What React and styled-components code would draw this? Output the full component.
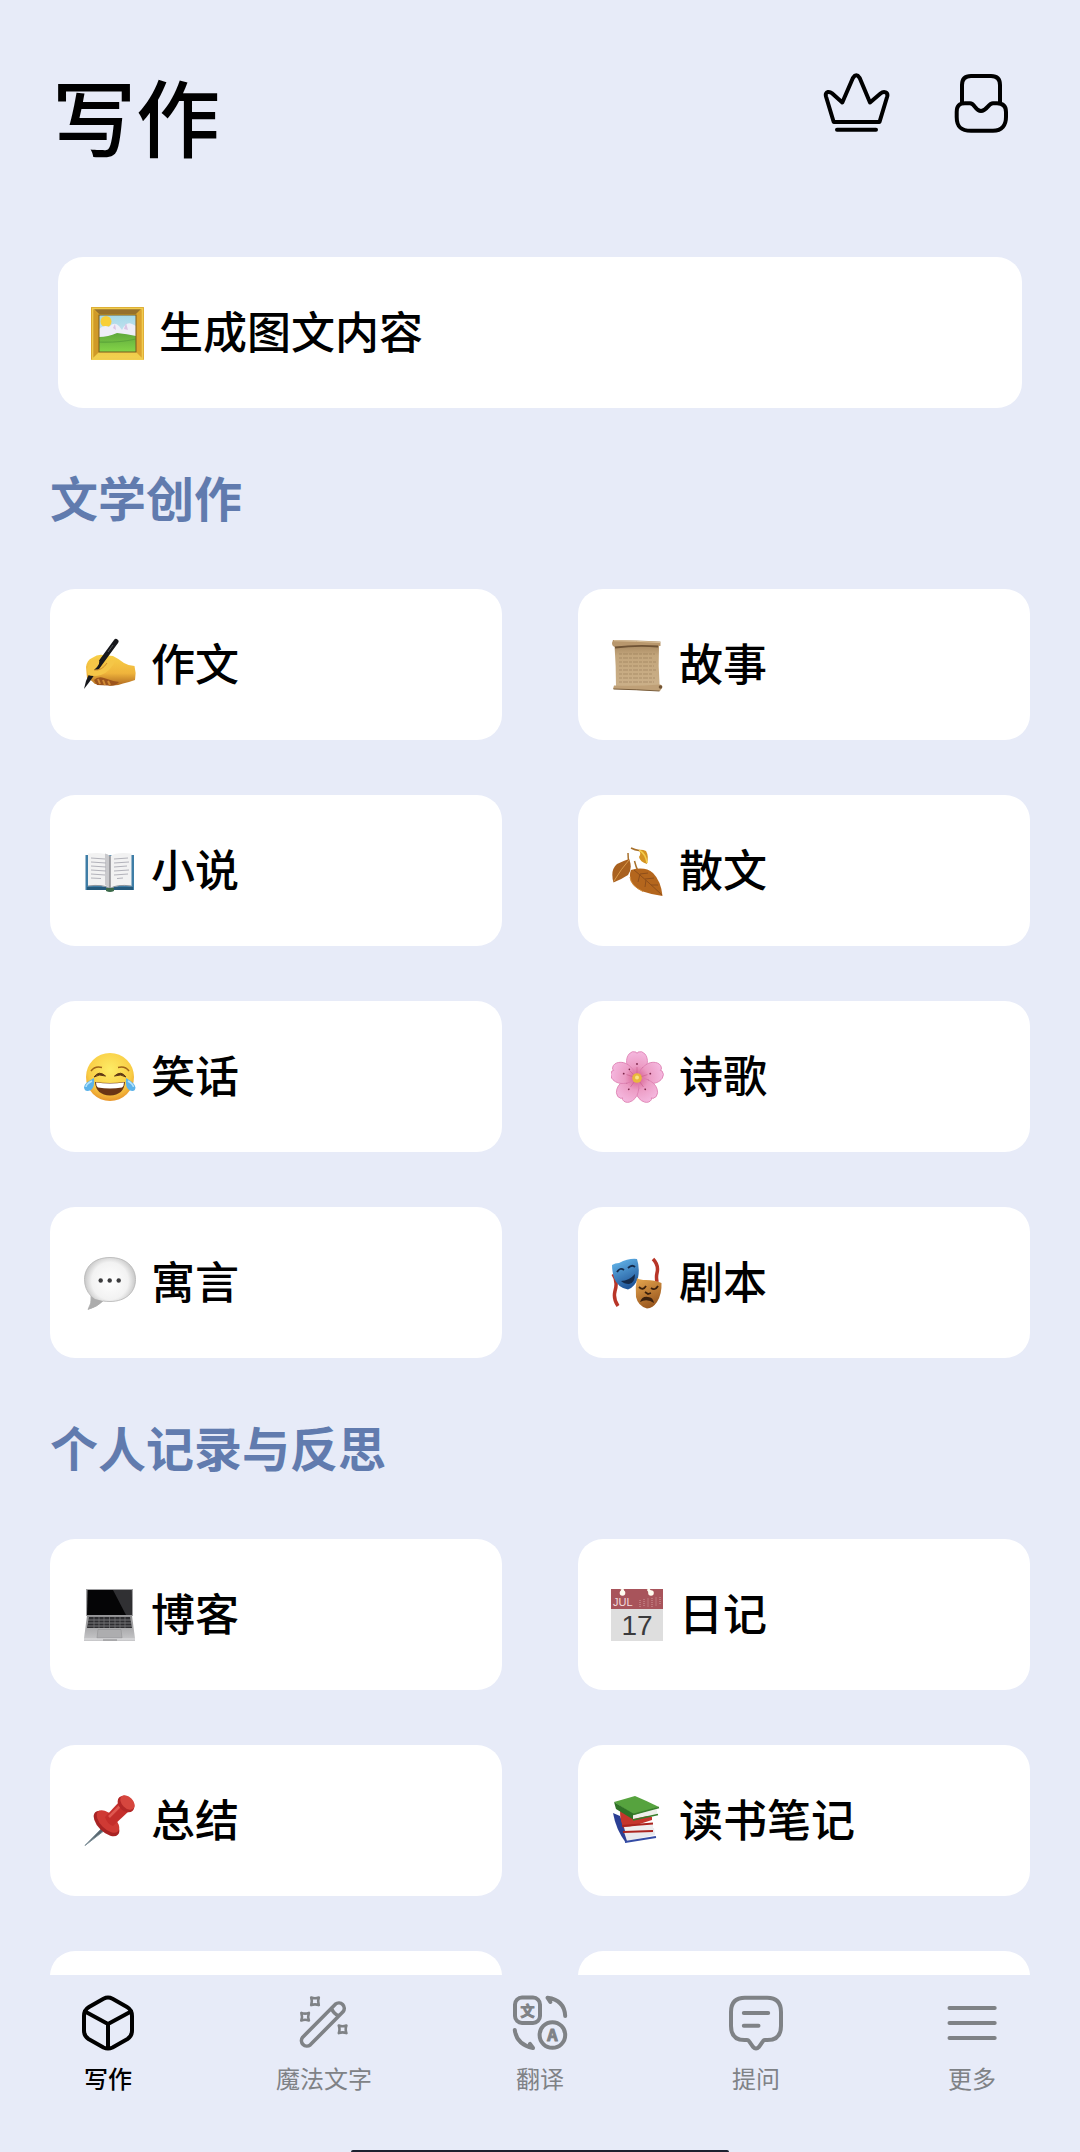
import React, { useState } from 'react';
import styled, { createGlobalStyle } from 'styled-components';

const GlobalStyle = createGlobalStyle`
  * {
    box-sizing: border-box;
  }
  body {
    margin: 0;
    background-color: #e7ebf8;
    font-family: 'Noto Sans CJK SC', sans-serif;
  }
`;

// Full-height column: scrolling content on top, tab bar at the bottom
const Screen = styled.div`
  display: flex;
  flex-direction: column;
  height: 100vh;
  color: #000000;
`;

const Content = styled.main`
  flex: 1;
  min-height: 0;
  overflow-y: auto;
  scrollbar-width: none;
  padding: 71px 50px 0;
`;

const Header = styled.header`
  display: flex;
  justify-content: space-between;
  align-items: flex-start;
  padding: 0 20px 0 2px;
  margin-bottom: 98px;
`;

const Title = styled.h1`
  margin: 0;
  font-size: 84px;
  line-height: 88px;
  font-weight: 500;
`;

const HeaderActions = styled.div`
  display: flex;
  gap: 62px;
`;

const IconButton = styled.button`
  display: flex;
  padding: 0;
  border: none;
  background: none;
  color: inherit;
  cursor: pointer;
`;

const Featured = styled.div`
  display: grid;
  padding: 0 8px;
`;

const SectionTitle = styled.h2`
  margin: 0;
  padding: 56px 0 61px;
  font-size: 48px;
  line-height: 64px;
  font-weight: 700;
  color: #617bae;
`;

const CardGrid = styled.div`
  display: grid;
  grid-template-columns: 1fr 1fr;
  gap: 55px 76px;
`;

const CardButton = styled.button`
  display: flex;
  align-items: center;
  gap: 14px;
  height: 151px;
  padding: 0 33px;
  border: none;
  border-radius: 25px;
  background-color: #ffffff;
  color: inherit;
  font-family: inherit;
  font-size: 44px;
  line-height: 64px;
  font-weight: 500;
  text-align: left;
  cursor: pointer;
`;

const CardLabel = styled.span`
  padding-bottom: 5px;
`;

const TabBar = styled.nav`
  display: flex;
  flex-direction: column;
  justify-content: space-between;
  align-items: center;
  height: 177px;
  padding-top: 20px;
`;

const TabList = styled.div`
  display: grid;
  grid-template-columns: repeat(5, 1fr);
  width: 100%;
`;

const TabLink = styled.a`
  display: flex;
  flex-direction: column;
  align-items: center;
  gap: 11px;
  color: ${({ $active }) => ($active ? '#000000' : '#7f8286')};
  font-size: 24px;
  line-height: 32px;
  font-weight: ${({ $active }) => ($active ? 500 : 400)};
  text-decoration: none;
`;

const HomeIndicator = styled.div`
  width: 35%;
  height: 2px;
  border-radius: 2px 2px 0 0;
  background-color: #1b2130;
`;

const LineSvg = styled.svg`
  display: block;
  fill: none;
  stroke: currentColor;
  stroke-width: 4;
  stroke-linecap: round;
  stroke-linejoin: round;
`;

const EmojiSvg = styled.svg`
  display: block;
  flex: none;
  width: 54px;
  height: 54px;
`;

const Emoji = ({ children }) => (
  <EmojiSvg viewBox="0 0 54 54" aria-hidden="true">
    {children}
  </EmojiSvg>
);

/* ---------- line icons ---------- */

const CrownIcon = () => (
  <LineSvg width="68" height="64" viewBox="0 0 68 64">
    <path d="M11.7 51L4 25.5Q3 21.8 6 21Q8 20.6 10 22.3L20.3 31.5L31 6.8Q34.3 1.8 37.6 6.8L48 31.5L58.5 22.5Q61 20.5 63.5 21.3Q66 22.5 65.2 25.5L57.5 51Z" />
    <path d="M15 58.7H54" />
  </LineSvg>
);

const InboxIcon = () => (
  <LineSvg width="58" height="64" viewBox="0 0 58 64">
    <path d="M10 32V14Q10 5 19 5H39Q48 5 48 14V32" />
    <path d="M18 32.3C23 32.3 23 40 29 40C35 40 36 32.3 41 32.3H45C51 32.3 54 35 54 41V46C54 54 50 59.7 41 59.7H19C9 59.7 4.7 56 4.7 46V41C4.7 35 7 32.3 13 32.3Z" />
  </LineSvg>
);

const CubeIcon = () => (
  <LineSvg width="56" height="56" viewBox="0 0 56 56">
    <path d="M23.5 3.7Q28 1.4 32.5 3.7L47 12Q52 15 52 21V35.5Q52 41 47.5 44L32.5 52.5Q28 54.7 23.5 52.5L8.5 44Q4 41 4 35.5V21Q4 15 9 12Z" />
    <path d="M5 16.5L28 29L51 16.5M28 29V53" />
  </LineSvg>
);

const WandIcon = () => (
  <LineSvg width="56" height="56" viewBox="0 0 56 56">
    <path d="M39.4 9.2L6.7 42.2A5.4 5.4 0 0 0 14.3 49.8L47 16.8A5.4 5.4 0 0 0 39.4 9.2ZM35.5 13.3Q37.5 18.5 42.8 21" strokeWidth="3.6" />
    <g strokeWidth="2.6">
      <path d="M15.2 2.5Q19 4 22.8 2.5Q21.4 6.3 22.8 10.1Q19 8.6 15.2 10.1Q16.6 6.3 15.2 2.5Z" />
      <path d="M5.3 17.9Q9.1 19.4 12.9 17.9Q11.5 21.7 12.9 25.5Q9.1 24 5.3 25.5Q6.7 21.7 5.3 17.9Z" />
      <path d="M42.8 30.5Q46.6 32 50.4 30.5Q49 34.3 50.4 38.1Q46.6 36.6 42.8 38.1Q44.2 34.3 42.8 30.5Z" />
    </g>
  </LineSvg>
);

const GlyphText = styled.text`
  fill: currentColor;
  stroke: currentColor;
  stroke-width: 1;
  font-size: ${({ $size }) => $size}px;
  font-weight: 700;
  text-anchor: middle;
`;

const TranslateIcon = () => (
  <LineSvg width="56" height="56" viewBox="0 0 56 56">
    <rect x="3" y="2.5" width="25" height="25.5" rx="7" />
    <GlyphText $size={14} x="15.5" y="20.5">文</GlyphText>
    <circle cx="40.4" cy="40" r="12.8" />
    <GlyphText $size={16} x="40.4" y="45.5">A</GlyphText>
    <path d="M2.8 35Q4.5 49.5 21 53L18 48.8M53.2 21Q52.5 5 35.5 2.7L38.3 7" />
  </LineSvg>
);

const ChatIcon = () => (
  <LineSvg width="56" height="56" viewBox="0 0 56 56">
    <path d="M17 2.7H39Q53 2.7 53 17V31Q53 45 39.5 45H37Q35.8 45 35 46.2L31 51.8Q28 55 25 51.8L21 46.2Q20.2 45 19 45H16.5Q3 45 3 31V17Q3 2.7 17 2.7Z" />
    <path d="M15.8 18H40.2M15.8 30.7H30.5" />
  </LineSvg>
);

const MenuIcon = () => (
  <LineSvg width="56" height="56" viewBox="0 0 56 56">
    <path d="M5.5 13H50.7M5.5 28H50.7M5.5 43H50.7" />
  </LineSvg>
);

/* ---------- colour pictures on the cards ---------- */

const Picture = () => (
  <Emoji>
    <defs>
      <linearGradient id="frame" x1="0" y1="0" x2="0" y2="1">
        <stop offset="0" stopColor="#d8a72c" />
        <stop offset="1" stopColor="#f3d250" />
      </linearGradient>
      <linearGradient id="sky" x1="0" y1="0" x2="0" y2="1">
        <stop offset="0" stopColor="#a4d8e8" />
        <stop offset="1" stopColor="#e6eef6" />
      </linearGradient>
      <linearGradient id="grass" x1="0" y1="0" x2="0" y2="1">
        <stop offset="0" stopColor="#5fa83c" />
        <stop offset="1" stopColor="#84d548" />
      </linearGradient>
    </defs>
    <rect y="1" width="53" height="53" rx="1" fill="url(#frame)" />
    <path d="M0 1L8 9V46L0 54Z" fill="#d09a28" />
    <path d="M53 1L45 9V46L53 54Z" fill="#dba32e" />
    <path d="M3 3H50L45 8H8Z" fill="#96702c" />
    <path d="M1.5 2.5V52.5H51.5V2.5Z" fill="none" stroke="#f0cc50" strokeWidth="1.6" />
    <rect x="8" y="9" width="37" height="37" fill="url(#sky)" />
    <circle cx="15" cy="15.5" r="5.5" fill="#f8cf38" />
    <path d="M8 23Q13 18 18 21Q23 15 28 20L31 24Q35 15 41 18L45 20V31H8Z" fill="#eeeef8" />
    <path d="M22 22L24 18L25 24ZM33 23L35 17L37 24Z" fill="#d9c5e4" />
    <path d="M8 31Q17 31 26 27Q36 28 45 30V46H8Z" fill="url(#grass)" />
    <path d="M8 36Q25 37 45 33" fill="none" stroke="#5ca53a" strokeWidth="1.2" />
    <rect x="8" y="9" width="37" height="37" fill="none" stroke="#7b5a1e" />
  </Emoji>
);

const WritingHand = () => (
  <Emoji>
    <defs>
      <linearGradient id="skin" x1="0" y1="0" x2="0" y2="1">
        <stop offset="0" stopColor="#f8d048" />
        <stop offset="0.6" stopColor="#efb43c" />
        <stop offset="1" stopColor="#b06a20" />
      </linearGradient>
    </defs>
    <path d="M3 29Q4 22 9 20Q15 16 20 17L30 18Q36 21 41 25Q46 28 51.5 28Q53.5 35 52 42Q46 44 40 45.5Q33 48.5 25 47L12 46Q8 42 4 40Z" fill="url(#skin)" />
    <path d="M11 42Q15 38 21 40Q29 43 36 44Q31 49 25 47.5L14 47Z" fill="#9c541c" />
    <path d="M15 41L17 46M20 42L22 47M25 43L27 47" stroke="#d08a35" strokeWidth="2" fill="none" />
    <path d="M33 3.5L10 35" stroke="#17181c" strokeWidth="5" strokeLinecap="round" />
    <path d="M7 34L11 37.5L6 44.5L1 51L3 43Z" fill="#17181c" />
    <path d="M4 31Q6 23 15 20.5Q19 25 11 32Q19 33 25 23L33 22Q27 34 18 37Q10 39 5 37Z" fill="#f5c647" />
    <path d="M30 7L25 14" stroke="#54575c" strokeWidth="1" />
    <path d="M11 32Q19 33 24 25" fill="none" stroke="#cd8d2c" strokeWidth="1" />
  </Emoji>
);

const Scroll = () => (
  <Emoji>
    <defs>
      <linearGradient id="paper" x1="0" y1="0" x2="0" y2="1">
        <stop offset="0" stopColor="#a88961" />
        <stop offset="0.25" stopColor="#c3a67c" />
        <stop offset="1" stopColor="#cbb089" />
      </linearGradient>
    </defs>
    <path d="M3.5 7H48Q47 28 48.7 49H5Q5 27 3.5 7Z" fill="url(#paper)" />
    <path d="M2 2Q25 2 49.5 3.5V8Q25 6 4 9Q1 8.5 1 5Z" fill="#b8976d" />
    <path d="M4 9.5Q25 7 47 8.5" stroke="#6f5335" strokeWidth="1.8" fill="none" />
    <path d="M3 2.7Q25 3 49 4.5" stroke="#d9bf98" fill="none" />
    <path d="M8 16H44M8 20H42M8 24H45M8 28H43M8 32H45M8 36H42M8 40H44M8 44H43" stroke="#8f7350" strokeWidth="1" strokeDasharray="3 1 5 1" opacity="0.5" />
    <path d="M3 47.5Q25 48.5 49 46.5Q52 47 51 50L49 53L2 51Z" fill="#bfa077" />
    <path d="M2.5 51Q25 51.5 48.5 53" stroke="#7a5e3c" fill="none" />
    <circle cx="49.5" cy="49" r="1.8" fill="#735535" />
  </Emoji>
);

const OpenBook = () => (
  <Emoji>
    <path d="M2.5 11H51V46H2.5Z" fill="#3e7da6" />
    <path d="M4 43H50V46H30Q27 48.5 23 46H4Z" fill="#255a7c" />
    <path d="M5 9.5Q20 7.5 27 12Q34 7.5 48.5 9.5V42Q34 40 27 45Q20 40 5 42Z" fill="#f2f2f2" />
    <path d="M27 12Q24 9.5 22 9.5V41Q25 42 27 45Z" fill="#c9c9cc" />
    <path d="M27 12V45" stroke="#8b8b90" strokeWidth="1.5" />
    <path d="M8 14L22 15M8 18L23 19M8 22L23 23M8 26L23 27M8 30L22 31M8 34L18 34.5M31 15L45 14M31 19L46 18M31 23L44 22M31 27L46 26M31 31L45 30M34 34.5L40 34" stroke="#b2b2ba" strokeWidth="1" />
    <path d="M5 42Q20 40 27 44.5Q34 40 48.5 42" fill="none" stroke="#8c949c" />
    <path d="M23 44H31V47Q27 49 23 47Z" fill="#3c6a4a" />
  </Emoji>
);

const Leaves = () => (
  <Emoji>
    <path d="M27 6Q31 5 35 7Q38 12 36 20Q29 18 28 13Q31 9 27 6Z" fill="#d59322" />
    <path d="M28 6Q35 10 36 19" stroke="#f3cc4c" strokeWidth="1.5" fill="none" />
    <path d="M20 4Q24 6 28 6.5M17 9Q17 15 18 18M23.5 17Q25 23 27 27" stroke="#a8702b" strokeWidth="1.5" fill="none" />
    <path d="M18 15Q22 24 17 31Q11 35 2.5 38.5Q-1 26 6 20Q12 17 18 15Z" fill="#a9611f" />
    <path d="M18 16Q10 25 3 37" stroke="#d99a4a" fill="none" />
    <path d="M20 26Q34 22 42 29Q50 37 51.5 52Q42 51 32 47.5Q19 42 19 32Q19 28 20 26Z" fill="#b4661d" />
    <path d="M23 26Q34 35 51 51M29 30L37 29M34 35L43 34M40 41L47 41M29 30L27 38M35 36L34 43" stroke="#8e4e1a" fill="none" />
    <path d="M19 33Q20 42 32 47.5" stroke="#d28a35" fill="none" />
  </Emoji>
);

const Joy = () => (
  <Emoji>
    <defs>
      <radialGradient id="face" cx="0.5" cy="0.35" r="0.65">
        <stop offset="0" stopColor="#fdec66" />
        <stop offset="0.7" stopColor="#f9cd45" />
        <stop offset="1" stopColor="#e9962b" />
      </radialGradient>
    </defs>
    <circle cx="27" cy="27" r="24" fill="url(#face)" />
    <path d="M8 21Q12 15.5 19 17.5M46 21Q42 15.5 35 17.5" stroke="#a06518" strokeWidth="1.5" fill="none" />
    <path d="M11 27Q16 20 22.5 26Q16 23.5 11 27ZM43 27Q38 20 31.5 26Q38 23.5 43 27Z" fill="#5e3715" stroke="#5e3715" strokeWidth="1" strokeLinejoin="round" />
    <path d="M12 32Q27 34 42 32Q41 45 27 45.5Q13 45 12 32Z" fill="#6b3515" />
    <path d="M13 32.5Q27 34.5 41 32.5Q41 36 39 37.5Q27 39.5 15 37.5Q13 36 13 32.5Z" fill="#ffffff" />
    <path d="M11 28Q12 37 8 40Q2 43 1 37.5Q1 33 11 28ZM43 28Q42 37 46 40Q52 43 52.5 37.5Q52 33 43 28Z" fill="#5cb3ea" />
    <path d="M9 31Q3 34 3 37M45 31Q50 34 50.5 37" stroke="#b3e3fb" strokeWidth="1.5" fill="none" />
  </Emoji>
);

const Blossom = () => (
  <Emoji>
    <defs>
      <radialGradient id="petal" gradientUnits="userSpaceOnUse" cx="0" cy="0" r="27">
        <stop offset="0" stopColor="#d4588a" />
        <stop offset="0.45" stopColor="#ec9cc4" />
        <stop offset="1" stopColor="#f5b9e0" />
      </radialGradient>
    </defs>
    {[0, 72, 144, 216, 288].map((angle) => (
      <g key={angle} transform={`translate(26 28) rotate(${angle})`}>
        <path d="M0 0C-8 -5 -14 -16 -8 -24Q-5 -27.5 -1 -26L0 -24.5L1 -26Q5 -27.5 8 -24C14 -16 8 -5 0 0Z" fill="url(#petal)" stroke="#dd7fb1" strokeWidth="0.8" />
        <path d="M0 0V-11M0 0L5 -10" stroke="#c95f8d" strokeWidth="0.6" />
        <circle cy="-14" r="0.9" fill="#7b2447" />
        <circle cx="6" cy="-10" r="0.8" fill="#7b2447" />
      </g>
    ))}
    <circle cx="26" cy="28" r="4.8" fill="#e9b83c" />
    <circle cx="26" cy="27.5" r="2" fill="#fbe382" />
  </Emoji>
);

const Speech = () => (
  <Emoji>
    <defs>
      <radialGradient id="bubble" cx="0.5" cy="0.45" r="0.55">
        <stop offset="0" stopColor="#ffffff" />
        <stop offset="0.65" stopColor="#f2f2f2" />
        <stop offset="1" stopColor="#b9b9b9" />
      </radialGradient>
    </defs>
    <path d="M27 1.5C43 1.5 52.5 11 52.5 23.5C52.5 36 43 45.5 27 45.5Q23 45.5 20 45Q14 51 5 53.5Q9 47 8 40Q1.5 33 1.5 23.5C1.5 11 11 1.5 27 1.5Z" fill="url(#bubble)" stroke="#b4b4b4" strokeWidth="0.8" />
    <path d="M8 40L12 43L20 45Q14 51 5 53.5Q9 47 8 40Z" fill="#acacac" />
    <g fill="#3c3c3e">
      <circle cx="17.7" cy="24.5" r="2.2" />
      <circle cx="26.7" cy="24.5" r="2.2" />
      <circle cx="35.7" cy="24.5" r="2.2" />
    </g>
  </Emoji>
);

const Masks = () => (
  <Emoji>
    <defs>
      <linearGradient id="comedy" x1="0" y1="0" x2="0.4" y2="1">
        <stop offset="0" stopColor="#69bdf0" />
        <stop offset="1" stopColor="#22589b" />
      </linearGradient>
      <linearGradient id="tragedy" x1="0" y1="0" x2="0.4" y2="1">
        <stop offset="0" stopColor="#e8a850" />
        <stop offset="1" stopColor="#9c5a20" />
      </linearGradient>
    </defs>
    <path d="M2 18Q7 25 4 35Q2 43 7 50M42 3Q48 9 46 17Q45 21 46 26" stroke="#b83527" strokeWidth="3.5" fill="none" />
    <path d="M1 9Q4 7 8 7Q18 2 26 3Q29 12 27 22Q24 31 17 33.5Q7 32 3 22Q1 15 1 9Z" fill="url(#comedy)" />
    <path d="M6 16Q9 11 13 14M17 12Q21 8 24 11" stroke="#142a4a" strokeWidth="1.8" fill="none" />
    <path d="M10 25Q18 25 24 18Q24 27 18 28Q13 28 10 25Z" fill="#142a4a" />
    <path d="M26 22Q29 24 35 24Q44 24 50.5 27Q51 38 46 46Q42 52 36 52.5Q27 50 25 41Q24 31 26 22Z" fill="url(#tragedy)" />
    <path d="M28 31Q32 35 35 30M40 32Q44 35 47 30M34 36L37 38L40 37" stroke="#3b200d" strokeWidth="1.8" fill="none" />
    <path d="M29 46Q31 40 37 41Q42 41 43 47Q36 42 29 46Z" fill="#3b200d" />
  </Emoji>
);

const Laptop = () => (
  <Emoji>
    <defs>
      <linearGradient id="deck" x1="0" y1="0" x2="0" y2="1">
        <stop offset="0" stopColor="#8d8d8f" />
        <stop offset="1" stopColor="#c9c9cb" />
      </linearGradient>
    </defs>
    <path d="M3 1H50V28H3Z" fill="#a0a0a2" />
    <path d="M4.500 2H48.500L49 27H4Z" fill="#050506" />
    <path d="M30 2H48.500L49 27H43Z" fill="#303033" />
    <path d="M4 27.500H49L52 50.500V53H1V50.500Z" fill="url(#deck)" />
    <path d="M6 29H47L49 40H4Z" fill="#2e2e31" />
    <path d="M5 32H48M5 35H48.500M4.500 38H49" stroke="#8a8a8d" strokeWidth="0.800" />
    <path d="M11 29V40M16 29V40M21 29V40M26.500 29V40M32 29V40M37 29V40M42 29V40" stroke="#77777a" strokeWidth="0.700" />
    <path d="M15 41.500H38L39 50H14Z" fill="#adadaf" stroke="#929294" strokeWidth="0.600" />
    <path d="M1 51H52" stroke="#e2e2e4" />
    <path d="M20 52H34" stroke="#88888a" />
  </Emoji>
);

const Calendar = () => (
  <Emoji>
    <rect y="1" width="52" height="52" fill="#dedede" />
    <rect y="1" width="52" height="20" fill="#a8545b" />
    <path d="M11 1L12 4M37 1L39 4" stroke="#fffdf0" strokeWidth="3" />
    <circle cx="11.5" cy="5" r="2.8" fill="#fffdf0" />
    <circle cx="40" cy="5" r="2.8" fill="#fffdf0" />
    <path d="M29 12V19M33 11V19M37 10.5V19M41 10V19M45 9.5V18M49 9V17" stroke="#d19a9c" strokeWidth="1" strokeDasharray="1 1" />
    <text x="2" y="18" fontFamily="Liberation Sans, sans-serif" fontSize="11" fill="#f3dcdc">JUL</text>
    <text x="26" y="47" textAnchor="middle" fontFamily="Liberation Sans, sans-serif" fontSize="28" fill="#3b3b3d">17</text>
  </Emoji>
);

const Pushpin = () => (
  <Emoji>
    <path d="M20 33L2 51.5L22 36Z" fill="#56646c" stroke="#7d8f98" strokeWidth="1" strokeLinejoin="round" />
    <ellipse cx="23.5" cy="29.5" rx="16" ry="8.5" transform="rotate(45 23.5 29.5)" fill="#a82323" />
    <ellipse cx="25" cy="27.5" rx="14" ry="7.5" transform="rotate(45 25 27.5)" fill="#cf3a34" />
    <path d="M22 23L36 8L46 17L30 32Q24 30 22 23Z" fill="#c42e2b" />
    <path d="M26 23L38 11" stroke="#df5850" strokeWidth="2.5" />
    <ellipse cx="43" cy="10" rx="9.5" ry="7" transform="rotate(45 43 10)" fill="#b32827" />
    <ellipse cx="44.5" cy="8.5" rx="8.5" ry="5.5" transform="rotate(45 44.5 8.5)" fill="#d6463e" />
  </Emoji>
);

const Books = () => (
  <Emoji>
    <path d="M2 19L9 22L17 44L15 49Q5 36 2 19Z" fill="#2b3f94" />
    <path d="M13 38L43 34L44 41L16 47Z" fill="#e9e9ee" />
    <path d="M14 48L45 43" stroke="#344ca5" strokeWidth="2" fill="none" />
    <path d="M9 17L41 23V26L13 35Q9 27 9 17Z" fill="#c6352c" />
    <path d="M13 33L42 30V36L14 37Z" fill="#efeeee" />
    <path d="M11 32L42 29.5M12 38L42 37" stroke="#ab241f" strokeWidth="1.8" fill="none" />
    <path d="M3 8L24 2Q36 7 48 13L23 21Z" fill="#56a33e" />
    <path d="M3 8L23 20V26L5 15Z" fill="#2f7226" />
    <path d="M22 21L46 15V20L22 25Z" fill="#eef0ea" />
    <path d="M22 20.5L48 13.5M22 26L47 20.500" stroke="#377d2b" strokeWidth="1.5" fill="none" />
  </Emoji>
);

const sections = [
  {
    title: '文学创作',
    items: [
      { label: '作文', Icon: WritingHand },
      { label: '故事', Icon: Scroll },
      { label: '小说', Icon: OpenBook },
      { label: '散文', Icon: Leaves },
      { label: '笑话', Icon: Joy },
      { label: '诗歌', Icon: Blossom },
      { label: '寓言', Icon: Speech },
      { label: '剧本', Icon: Masks },
    ],
  },
  {
    title: '个人记录与反思',
    items: [
      { label: '博客', Icon: Laptop },
      { label: '日记', Icon: Calendar },
      { label: '总结', Icon: Pushpin },
      { label: '读书笔记', Icon: Books },
      { label: '' },
      { label: '' },
    ],
  },
];

const tabs = [
  { id: 'write', label: '写作', Icon: CubeIcon },
  { id: 'magic', label: '魔法文字', Icon: WandIcon },
  { id: 'translate', label: '翻译', Icon: TranslateIcon },
  { id: 'ask', label: '提问', Icon: ChatIcon },
  { id: 'more', label: '更多', Icon: MenuIcon },
];

const Card = ({ label, Icon }) => (
  <CardButton type="button">
    {Icon && <Icon />}
    {label && <CardLabel>{label}</CardLabel>}
  </CardButton>
);

const App = () => {
  const [activeTab, setActiveTab] = useState('write');

  return (
    <Screen>
      <GlobalStyle />
      <Content>
        <Header>
          <Title>写作</Title>
          <HeaderActions>
            <IconButton type="button" aria-label="会员">
              <CrownIcon />
            </IconButton>
            <IconButton type="button" aria-label="收件箱">
              <InboxIcon />
            </IconButton>
          </HeaderActions>
        </Header>

        <Featured>
          <Card label="生成图文内容" Icon={Picture} />
        </Featured>

        {sections.map((section) => (
          <section key={section.title}>
            <SectionTitle>{section.title}</SectionTitle>
            <CardGrid>
              {section.items.map((item, index) => (
                <Card key={index} label={item.label} Icon={item.Icon} />
              ))}
            </CardGrid>
          </section>
        ))}
      </Content>

      <TabBar>
        <TabList>
          {tabs.map(({ id, label, Icon }) => (
            <TabLink
              key={id}
              href={`#${id}`}
              $active={activeTab === id}
              onClick={() => setActiveTab(id)}
            >
              <Icon />
              <span>{label}</span>
            </TabLink>
          ))}
        </TabList>
        <HomeIndicator />
      </TabBar>
    </Screen>
  );
};

export default App;
